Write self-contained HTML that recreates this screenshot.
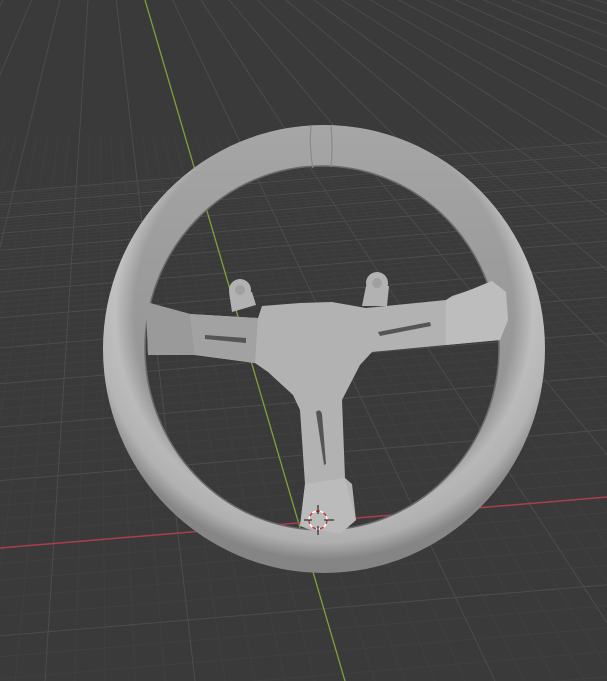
<!DOCTYPE html>
<html><head><meta charset="utf-8">
<style>html,body{margin:0;padding:0;background:#3a3a3a;overflow:hidden;width:607px;height:681px}svg{display:block;position:absolute;left:0;top:0}</style>
</head><body>
<svg id="s" width="607" height="681" viewBox="0 0 607 681" xmlns="http://www.w3.org/2000/svg">
<defs>
<radialGradient id="rg" cx="0.5" cy="0.42" r="0.55">
<stop offset="0.78" stop-color="#9a9a9a"/>
<stop offset="0.86" stop-color="#c4c4c4"/>
<stop offset="0.93" stop-color="#bdbdbd"/>
<stop offset="1" stop-color="#909090"/>
</radialGradient>
<linearGradient id="lg" x1="0" y1="0" x2="0" y2="1">
<stop offset="0" stop-color="#fff" stop-opacity="0.12"/>
<stop offset="1" stop-color="#000" stop-opacity="0.08"/>
</linearGradient>
</defs>
<rect width="607" height="681" fill="#3a3a3a"/>
<g id="grid"></g>
<line x1="145" y1="0" x2="345" y2="681" stroke="#7ea13c" stroke-width="1.3"/>
<line x1="0" y1="548" x2="607" y2="497" stroke="#a8404c" stroke-width="1.5"/>
<path fill-rule="evenodd" fill="url(#rg)" d="M103,349 a221,224 0 1,0 442,0 a221,224 0 1,0 -442,0 Z M145,348 a177,182 0 1,0 354,0 a177,182 0 1,0 -354,0 Z"/>
<path fill-rule="evenodd" fill="url(#lg)" d="M103,349 a221,224 0 1,0 442,0 a221,224 0 1,0 -442,0 Z M145,348 a177,182 0 1,0 354,0 a177,182 0 1,0 -354,0 Z"/>
<ellipse cx="322" cy="348" rx="177" ry="182" fill="none" stroke="#6a6a6a" stroke-width="1.5"/>
<path d="M311,126 Q309,147 313,168 M331,126 Q333,147 331,167" stroke="#8a8a8a" stroke-width="1.2" fill="none"/>
<g fill="#b2b2b2">
<circle cx="240" cy="290" r="11"/>
<circle cx="377" cy="283" r="11"/>
<path d="M229,292 L252,292 L256,305 L232,312 Z"/>
<path d="M366,286 L389,286 L387,306 L362,306 Z"/>
<path d="M146,302 L190,314 L258,318 L262,306 L300,303 L332,302 L366,308 L446,300 L452,296 L470,290 L492,281 L506,292 L508,320 L500,340 L446,345 L372,352 L360,365 L342,400 L345,478 L352,484 L356,520 L340,534 L318,533 L300,526 L305,484 L300,410 L293,395 L268,372 L255,363 L195,355 L148,355 Z"/>
</g>
<path d="M146,302 L190,314 L195,355 L148,355 Z" fill="#9a9a9a"/>
<path d="M190,314 L258,318 L255,363 L195,355 Z" fill="#a2a2a2"/>
<path d="M446,300 L492,281 L506,292 L508,320 L500,340 L446,345 Z" fill="#bdbdbd"/>
<path d="M305,484 L345,478 L356,520 L340,534 L300,526 Z" fill="#bbbbbb"/>
<g fill="#555">
<path d="M205,335 L246,338 L246,343 L205,339 Z"/>
<path d="M378,332 L430,322 L431,326 L380,336 Z"/>
<path d="M316,412 Q320,408 322,414 L326,464 L324,465 Z"/>
</g>
<circle cx="240" cy="290" r="5" fill="#a0a0a0"/>
<circle cx="377" cy="283" r="5" fill="#a0a0a0"/>
<circle cx="318" cy="520" r="9" fill="none" stroke="#fff" stroke-width="1.5"/>
<circle cx="318" cy="520" r="9" fill="none" stroke="#d03030" stroke-width="1.5" stroke-dasharray="4 4"/>
<path d="M318,505 V514 M318,526 V535 M304,520 H312 M324,520 H334" stroke="#111" stroke-width="1"/>
</svg>
<script>
(function(){
var g=document.getElementById('grid'),out='';
var H=-33,c=2.26e-4,slope=-0.084;
function hl(y0,col,w){out+='<line x1="0" y1="'+y0+'" x2="607" y2="'+(y0+slope*607)+'" stroke="'+col+'" stroke-width="'+w+'"/>';}
var u0=1/(548-H);
for(var k=-60;k<=60;k++){
 var u=u0+k*c/5; if(u<=0)continue; var y=H+1/u; if(y<-60||y>740)continue;
 var major=(k%5===0);
 hl(y, major?'#4c4c4c':'#414141', major?1:0.8);
}
var vx=98,vy=-158;
for(var i=-80;i<=80;i++){
 var xb=345+i*30; var major=(i%5===0);
 if(major&&i===0)continue;
 var t0=major?0.18:0.35; // start fraction to avoid dense convergence
 var sx=vx+(xb-vx)*t0, sy=vy+(681-vy)*t0;
 out+='<line x1="'+sx+'" y1="'+sy+'" x2="'+xb+'" y2="681" stroke="'+(major?'#4c4c4c':'#414141')+'" stroke-width="'+(major?1:0.8)+'"/>';
}
g.innerHTML=out;
})();
</script>
</body></html>
